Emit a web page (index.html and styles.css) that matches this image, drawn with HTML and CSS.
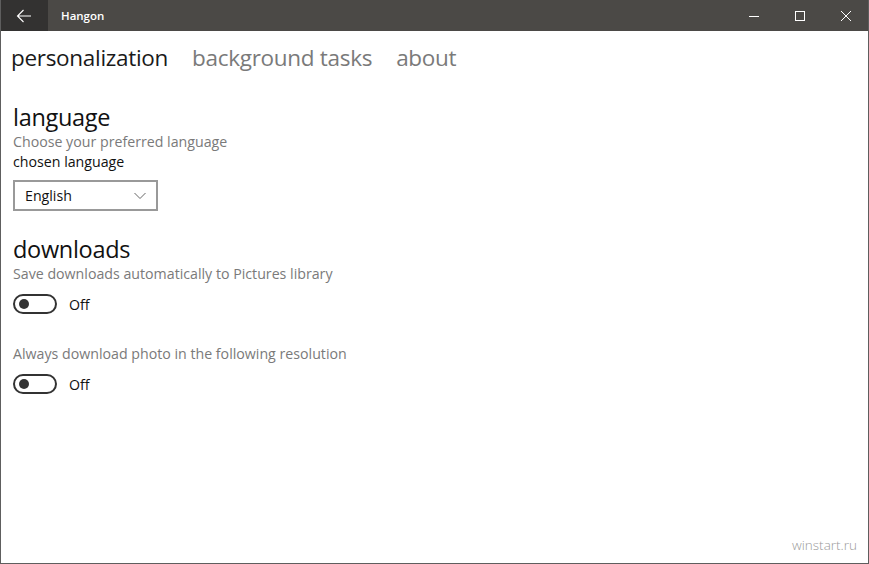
FILE: index.html
```html
<!DOCTYPE html>
<html>
<head>
<meta charset="utf-8">
<link rel="stylesheet" href="styles.css">
</head>
<body>
<div class="window">
  <div class="titlebar">
    <div class="back">
      <svg width="16" height="16" viewBox="0 0 16 16"><path d="M15 8H1.5M7.5 2L1.5 8l6 6" fill="none" stroke="#fff" stroke-width="1.1"/></svg>
    </div>
    <div class="title">Hangon</div>
    <div class="controls">
      <div class="ctl"><svg width="10" height="10" viewBox="0 0 10 10"><path d="M0 5.5h10" stroke="#fff" stroke-width="1"/></svg></div>
      <div class="ctl"><svg width="10" height="10" viewBox="0 0 10 10"><rect x="0.5" y="0.5" width="9" height="9" fill="none" stroke="#fff" stroke-width="1"/></svg></div>
      <div class="ctl"><svg width="10" height="10" viewBox="0 0 10 10"><path d="M0 0L10 10M10 0L0 10" stroke="#fff" stroke-width="1"/></svg></div>
    </div>
  </div>
  <div class="content">
    <div class="pivot">
      <span class="tab active">personalization</span>
      <span class="tab">background tasks</span>
      <span class="tab">about</span>
    </div>
    <div class="section">
      <h2 class="heading">language</h2>
      <div class="desc">Choose your preferred language</div>
      <div class="label">chosen language</div>
      <div class="combo">
        <span>English</span>
        <svg width="12" height="8" viewBox="0 0 12 8"><path d="M0.5 1l5.5 5.5L11.5 1" fill="none" stroke="#666" stroke-width="1"/></svg>
      </div>
    </div>
    <div class="section second-section">
      <h2 class="heading">downloads</h2>
      <div class="desc">Save downloads automatically to Pictures library</div>
      <div class="toggle-row">
        <div class="toggle"><div class="knob"></div></div>
        <span class="state">Off</span>
      </div>
      <div class="desc second">Always download photo in the following resolution</div>
      <div class="toggle-row">
        <div class="toggle"><div class="knob"></div></div>
        <span class="state">Off</span>
      </div>
    </div>
    <div class="spacer"></div>
    <div class="watermark">winstart.ru</div>
  </div>
</div>
</body>
</html>
```
FILE: styles.css
```css
html, body {
  margin: 0;
  padding: 0;
  background: #fff;
}
body {
  font-family: "Open Sans", "Noto Sans", sans-serif;
}
.window {
  width: 869px;
  height: 564px;
  box-sizing: border-box;
  border: 1px solid #5e5e5e;
  border-top: none;
  display: flex;
  flex-direction: column;
  overflow: hidden;
}
.titlebar {
  height: 31px;
  flex: none;
  background: #4b4946;
  display: flex;
  align-items: center;
  color: #fff;
  margin: 0 -1px;
}
.back {
  width: 48px;
  height: 31px;
  background: #333231;
  display: flex;
  align-items: center;
  justify-content: center;
}
.title {
  margin-left: 13px;
  font-size: 11.5px;
  font-weight: 600;
  flex: 1;
}
.controls {
  display: flex;
  height: 31px;
}
.ctl {
  width: 46px;
  height: 31px;
  display: flex;
  align-items: center;
  justify-content: center;
}
.content {
  flex: 1;
  display: flex;
  flex-direction: column;
  padding: 0 0 0 12px;
}
.pivot {
  display: flex;
  gap: 24px;
  margin-top: 11px;
  margin-left: -2px;
  height: 40px;
}
.tab {
  font-size: 22.5px;
  color: #7a7a7a;
  letter-spacing: -0.3px;
  line-height: 32px;
}
.tab.active {
  color: #1a1a1a;
}
.section {
  margin-top: 21px;
}
.second-section {
  margin-top: 24px;
}
.heading {
  margin: 0;
  font-size: 23.5px;
  font-weight: 400;
  line-height: 29px;
  color: #111;
  letter-spacing: -0.3px;
}
.desc {
  font-size: 14.2px;
  line-height: 20px;
  color: #7a7a7a;
}
.desc.second {
  margin-top: 30px;
}
.label {
  font-size: 14.2px;
  line-height: 20px;
  color: #111;
}
.combo {
  margin-top: 8px;
  width: 145px;
  height: 31px;
  box-sizing: border-box;
  border: 2px solid #999;
  display: flex;
  align-items: center;
  justify-content: space-between;
  padding: 0 10px 0 10px;
  font-size: 14.2px;
  color: #111;
}
.toggle-row {
  display: flex;
  align-items: center;
  margin-top: 10px;
  height: 20px;
}
.toggle {
  width: 44px;
  height: 20px;
  box-sizing: border-box;
  border: 2px solid #333;
  border-radius: 10px;
  display: flex;
  align-items: center;
  padding-left: 4px;
}
.knob {
  width: 10px;
  height: 10px;
  border-radius: 50%;
  background: #333;
}
.state {
  margin-left: 12px;
  font-size: 14.2px;
  color: #111;
}
.spacer {
  flex: 1;
}
.watermark {
  align-self: flex-end;
  margin: 0 11px 9px 0;
  font-size: 13.5px;
  color: #9a9a9a;
  font-weight: 300;
}
```
